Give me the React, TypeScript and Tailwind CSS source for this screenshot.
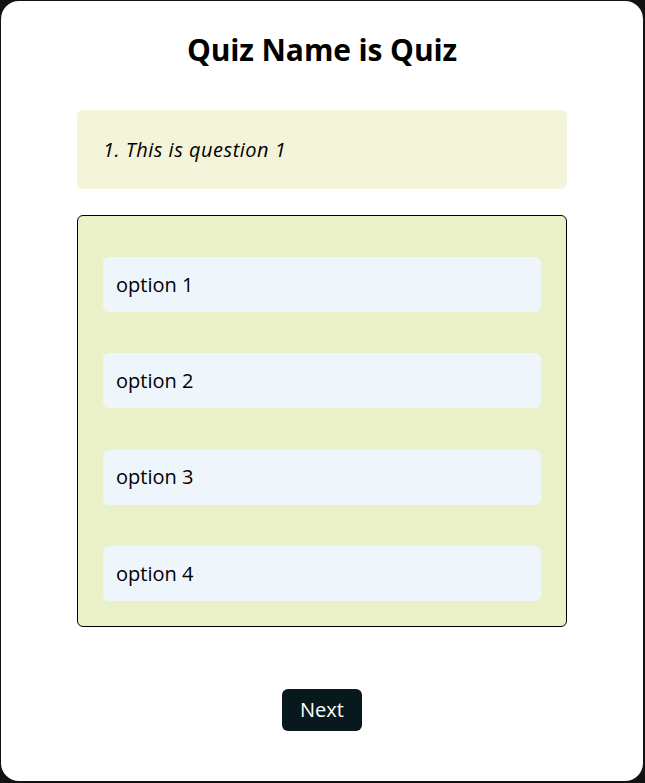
import React, { useState } from 'react';

const options = ['option 1', 'option 2', 'option 3', 'option 4'];

const App: React.FC = () => {
  const [selected, setSelected] = useState<number | null>(null);

  return (
    <div className="min-h-[783px] bg-[#121212] pt-px pl-px pr-[2px] pb-px" style={{ fontFamily: '"Open Sans", sans-serif' }}>
      <div className="h-[780px] bg-white rounded-[18px] flex flex-col items-center pt-[27px]">
        <h1 className="text-[30px] font-bold text-black leading-[44px] tracking-[-0.1px]">Quiz Name is Quiz</h1>

        <div className="mt-[38px] w-[490px] h-[79px] bg-[#f3f4d9] rounded-[6px] flex items-center pl-[26px]">
          <p className="text-[20px] italic text-black tracking-[0.5px]">1. This is question 1</p>
        </div>

        <div className="mt-[26px] w-[490px] border border-black rounded-[6px] bg-[#eaf0c8] px-[25px] pt-[41px] pb-[25px] flex flex-col gap-[41.4px]">
          {options.map((opt, i) => (
            <button
              key={opt}
              onClick={() => setSelected(i)}
              className={`h-[55px] w-full rounded-[6px] text-left pl-[13px] text-[20px] text-black ${selected === i ? 'bg-[#dbeafe]' : 'bg-[#eef6fc]'}`}
            >
              {opt}
            </button>
          ))}
        </div>

        <button className="mt-[62px] w-[80px] h-[42px] rounded-[6px] bg-[#08191e] text-white text-[20px]">Next</button>
      </div>
    </div>
  );
};

export default App;
